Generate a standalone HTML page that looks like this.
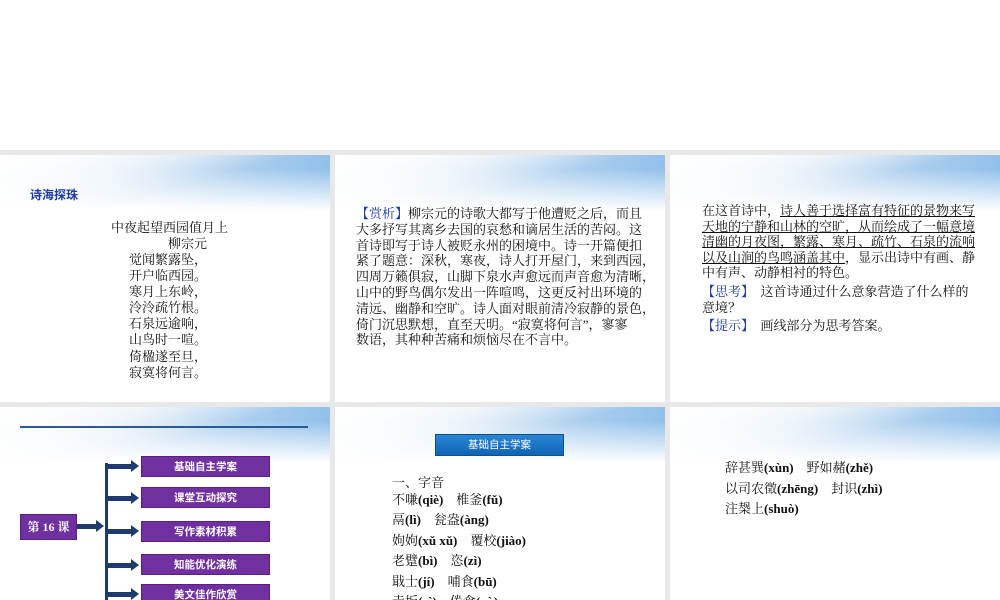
<!DOCTYPE html>
<html><head><meta charset="utf-8"><style>
body{margin:0;width:1000px;height:600px;background:#fff;position:relative;overflow:hidden;font-family:"Liberation Serif","Noto Serif CJK SC","Noto Sans CJK SC",serif;color:#111}
.gap{position:absolute;background:#e8e8e8}
.s{position:absolute;overflow:hidden;background:#fff}
.hd{position:absolute;left:0;top:0;width:100%;height:55px;
background:linear-gradient(180deg,rgba(255,255,255,0) 25%,#fff 100%),linear-gradient(165deg,#fff 0%,rgba(255,255,255,.6) 30%,rgba(255,255,255,0) 55%),linear-gradient(100deg,#f4f8fc 0%,#dbe9f6 35%,#a9cdee 75%,#8fbfea 100%)}
.t{position:absolute;font-size:13px;line-height:16.4px;white-space:nowrap}
u{text-decoration:underline}
.b{color:#1a3aa0}
.pb{position:absolute;left:141px;width:127px;height:19px;background:#7030a0;border:1px solid #5a2080;color:#fff;font-family:"Noto Sans CJK SC",sans-serif;font-size:10.5px;font-weight:bold;text-align:center;line-height:19px}
.ar{position:absolute;left:108px;width:24px;height:5px;background:#1f3a6e}
.ar:after{content:"";position:absolute;right:-7px;top:-4px;border-left:8px solid #1f3a6e;border-top:6.5px solid transparent;border-bottom:6.5px solid transparent}
.py{font-weight:bold}
</style></head><body>
<div class="gap" style="left:0;top:150px;width:1000px;height:5px"></div>
<div class="gap" style="left:0;top:402px;width:1000px;height:5px"></div>
<div class="gap" style="left:330px;top:150px;width:5px;height:450px"></div>
<div class="gap" style="left:665px;top:150px;width:5px;height:450px"></div>

<div class="s" style="left:0;top:155px;width:330px;height:247px"><div class="hd"></div>
<div class="t b" style="left:30px;top:32px;font-family:'Noto Sans CJK SC',sans-serif;font-weight:bold;font-size:12px">诗海探珠</div>
<div class="t" style="left:111px;top:65px">中夜起望西园值月上</div>
<div class="t" style="left:168px;top:81px">柳宗元</div>
<div class="t" style="left:129px;top:97px;line-height:16.1px">觉闻繁露坠，<br>开户临西园。<br>寒月上东岭，<br>泠泠疏竹根。<br>石泉远逾响，<br>山鸟时一喧。<br>倚楹遂至旦，<br>寂寞将何言。</div>
</div>

<div class="s" style="left:335px;top:155px;width:330px;height:247px"><div class="hd"></div>
<div class="t" style="left:21px;top:51px;line-height:15.8px"><span class="b">【赏析】</span>柳宗元的诗歌大都写于他遭贬之后，而且<br>大多抒写其离乡去国的哀愁和谪居生活的苦闷。这<br>首诗即写于诗人被贬永州的困境中。诗一开篇便扣<br>紧了题意：深秋，寒夜，诗人打开屋门，来到西园，<br>四周万籁俱寂，山脚下泉水声愈远而声音愈为清晰，<br>山中的野鸟偶尔发出一阵喧鸣，这更反衬出环境的<br>清远、幽静和空旷。诗人面对眼前清冷寂静的景色，<br>倚门沉思默想，直至天明。“寂寞将何言”，寥寥<br>数语，其种种苦痛和烦恼尽在不言中。</div>
</div>

<div class="s" style="left:670px;top:155px;width:330px;height:247px"><div class="hd"></div>
<div class="t" style="left:32px;top:48px;line-height:15.6px">在这首诗中，<u>诗人善于选择富有特征的景物来写</u><br><u>天地的宁静和山林的空旷，从而绘成了一幅意境</u><br><u>清幽的月夜图，繁露、寒月、疏竹、石泉的流响</u><br><u>以及山涧的鸟鸣涵盖其中</u>，显示出诗中有画、静<br>中有声、动静相衬的特色。</div>
<div class="t" style="left:32px;top:129px;line-height:15.6px"><span class="b">【思考】</span>　这首诗通过什么意象营造了什么样的<br>意境？</div>
<div class="t" style="left:32px;top:163px"><span class="b">【提示】</span>　画线部分为思考答案。</div>
</div>

<div class="s" style="left:0;top:407px;width:330px;height:193px"><div class="hd"></div>
<div style="position:absolute;left:20px;top:19px;width:288px;height:1.5px;background:#2a5a9a"></div>
<div style="position:absolute;left:105px;top:56px;width:3px;height:140px;background:#1f3a6e"></div>
<div style="position:absolute;left:20px;top:107px;width:55px;height:24px;background:#7030a0;border:1px solid #5a2080;color:#fff;font-size:12px;font-weight:bold;line-height:24px;text-align:center">第 16 课</div>
<div class="ar" style="left:77px;width:20px;top:117px"></div>
<div class="ar" style="top:57px"></div><div class="pb" style="top:49px">基础自主学案</div>
<div class="ar" style="top:89px"></div><div class="pb" style="top:80px">课堂互动探究</div>
<div class="ar" style="top:122px"></div><div class="pb" style="top:114px">写作素材积累</div>
<div class="ar" style="top:156px"></div><div class="pb" style="top:147px">知能优化演练</div>
<div class="ar" style="top:185px"></div><div class="pb" style="top:177px">美文佳作欣赏</div>
</div>

<div class="s" style="left:335px;top:407px;width:330px;height:193px"><div class="hd"></div>
<div style="position:absolute;left:100px;top:27px;width:127px;height:20px;background:linear-gradient(#2a86d4,#0f64b4);border:1px solid #0a4f94;color:#fff;font-family:'Noto Sans CJK SC',sans-serif;font-size:10.5px;line-height:20px;text-align:center">基础自主学案</div>
<div class="t" style="left:57px;top:68px;line-height:16.5px">一、字音<br>不嗛<span class="py">(qiè)</span>　椎釜<span class="py">(fǔ)</span></div>
<div class="t" style="left:57px;top:103px;line-height:20.5px">鬲<span class="py">(lì)</span>　瓮盎<span class="py">(àng)</span><br>姁姁<span class="py">(xǔ xǔ)</span>　覆校<span class="py">(jiào)</span><br>老躄<span class="py">(bì)</span>　恣<span class="py">(zì)</span><br>戢士<span class="py">(jí)</span>　哺食<span class="py">(bū)</span><br>寺坂<span class="py">(xì)</span>　倦食<span class="py">(xù)</span></div>
</div>

<div class="s" style="left:670px;top:407px;width:330px;height:193px"><div class="hd"></div>
<div class="t" style="left:55px;top:51px;line-height:20.5px">辞甚巽<span class="py">(xùn)</span>　野如赭<span class="py">(zhě)</span><br>以司农徵<span class="py">(zhēng)</span>　封识<span class="py">(zhì)</span><br>注椝上<span class="py">(shuò)</span></div>
</div>
</body></html>
